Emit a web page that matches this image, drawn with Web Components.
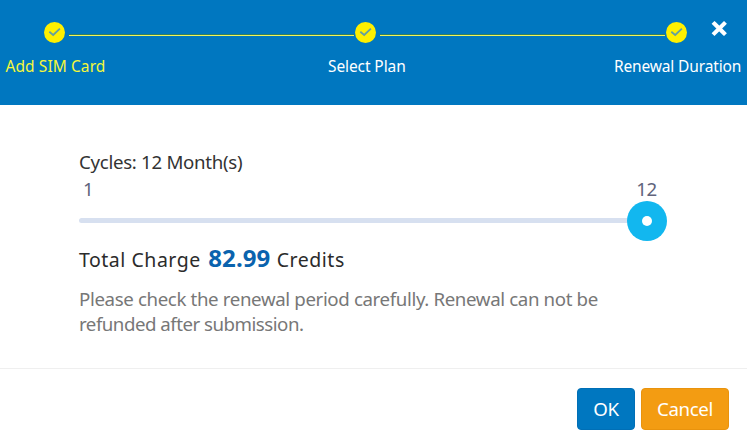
<!DOCTYPE html>
<html lang="en"><head><meta charset="utf-8"><title>Renewal Duration</title>
<style>
html,body{margin:0;height:100%;overflow:hidden;background:#fff}
body{font-family:"Noto Sans","Open Sans",sans-serif;font-size:18.7px;color:#333}
</style></head><body>
<renewal-dialog>
  <wizard-steps slot="header">
    <wizard-step active style="--w:100px;--ls:.08px">Add SIM Card</wizard-step>
    <step-line></step-line>
    <wizard-step style="--w:77px;--ls:-.1px;--shift:1px">Select Plan</wizard-step>
    <step-line></step-line>
    <wizard-step style="--w:127px;--ls:-.15px;--shift:1px">Renewal Duration</wizard-step>
  </wizard-steps>
  <cycle-slider min="1" max="12">Cycles: 12 Month(s)</cycle-slider>
  <charge-total amount="82.99"></charge-total>
  <renewal-note><span>Please check the renewal period carefully. Renewal can not be</span> <span style="letter-spacing:-.5px">refunded after submission.</span></renewal-note>
  <dialog-button slot="footer" style="--w:58px;--bg:#0077c0;--edge:#006fb6">OK</dialog-button>
  <dialog-button slot="footer" style="--w:88px;--bg:#f39c12;--edge:#e9930d">Cancel</dialog-button>
</renewal-dialog>
<script>
const define=(name,html,setup)=>customElements.define(name,class extends HTMLElement{
  connectedCallback(){
    if(this.shadowRoot)return;
    const root=this.attachShadow({mode:'open'});
    root.innerHTML=html;
    if(setup)setup(this,root);
  }
});
define('renewal-dialog',`<style>
:host{display:flex;flex-direction:column;width:747px;height:448px;background:#fff}
header{position:relative;height:105px;background:#0077c0;flex:none}
.close{position:absolute;left:711px;top:20px;width:16px;height:17px}
main{height:263px;padding:45px 79px 0;box-sizing:border-box;flex:none}
footer{display:flex;justify-content:flex-end;gap:6px;padding:19px 18px 0;border-top:1px solid #efefef}
</style>
<header><slot name="header"></slot>
<svg class="close" viewBox="0 0 16 17"><path d="M3.5 3.8L13 13.2M13 3.8L3.5 13.2" stroke="#fff" stroke-width="4.1" stroke-linecap="square"/></svg></header>
<main><slot></slot></main><footer><slot name="footer"></slot></footer>`);
define('wizard-steps',`<style>:host{display:flex;padding:22px 60px 0 44px}</style><slot></slot>`);
define('step-line',`<style>:host{flex:1;display:block;height:1px;margin:12px 1px 0 4px;background:#f2f55a;border-top:1px solid #347f62}</style>`);
define('wizard-step',`<style>
:host{display:flex;flex-direction:column;align-items:center;width:21px;flex:none;color:#fff;font-size:15.5px;letter-spacing:var(--ls)}
:host([active]){color:#f5f73a}
svg{width:21px;height:21px;flex:none}
.label{width:var(--w);margin:12px 0 0 calc(var(--shift,1px)*2);line-height:22px;white-space:nowrap;flex:none}
</style><svg viewBox="0 0 21 21"><circle cx="10.5" cy="10.5" r="10.5" fill="#fff000"/><path d="M5.3 9.7L9.2 13L15.9 6.6" fill="none" stroke="#639fa0" stroke-width="1.8"/></svg>
<div class="label"><slot></slot></div>`);
define('cycle-slider',`<style>
:host{display:block}
.title{line-height:24px;letter-spacing:-.3px}
.range{display:flex;justify-content:space-between;line-height:26px;margin-top:2px;padding:0 10px 0 4px;color:#61647c;width:588px;box-sizing:border-box;letter-spacing:-.3px}
.slider{display:flex;align-items:center;width:588px;height:40px;margin-top:-1px}
.track{flex:1;height:5px;border-radius:3px 0 0 3px;background:#d7e0f0;margin:0 -1px 1px 0}
.knob{width:40px;height:40px;border-radius:50%;background:#12b7ef;display:grid;place-items:center}
.knob i{width:10px;height:10px;border-radius:50%;background:#fff}
</style><div class="title"><slot></slot></div>
<div class="range"><span class="min"></span><span class="max"></span></div>
<div class="slider"><div class="track"></div><div class="knob"><i></i></div></div>`,(el,r)=>{
  r.querySelector('.min').textContent=el.getAttribute('min');
  r.querySelector('.max').textContent=el.getAttribute('max');
});
define('charge-total',`<style>
:host{display:flex;align-items:baseline;height:34px;line-height:34px;font-size:19.5px;letter-spacing:.52px;color:#2b2b2b}
b{font-size:24px;letter-spacing:.1px;color:#0a63ae;margin:0 5.5px 0 7.5px;width:63px}
</style><span>Total Charge</span><b></b><span>Credits</span>`,(el,r)=>{
  r.querySelector('b').textContent=el.getAttribute('amount');
});
define('renewal-note',`<style>:host{display:block;width:530px;margin-top:11px;line-height:25px;letter-spacing:-.37px;color:#777}</style><slot></slot>`);
define('dialog-button',`<style>
:host{display:block}
button{display:block;width:var(--w);height:42px;padding:0;border:1px solid var(--edge);border-radius:4px;background:var(--bg);color:#fff;font:inherit;line-height:40px;letter-spacing:-.4px}
</style><button><slot></slot></button>`);
</script></body></html>
